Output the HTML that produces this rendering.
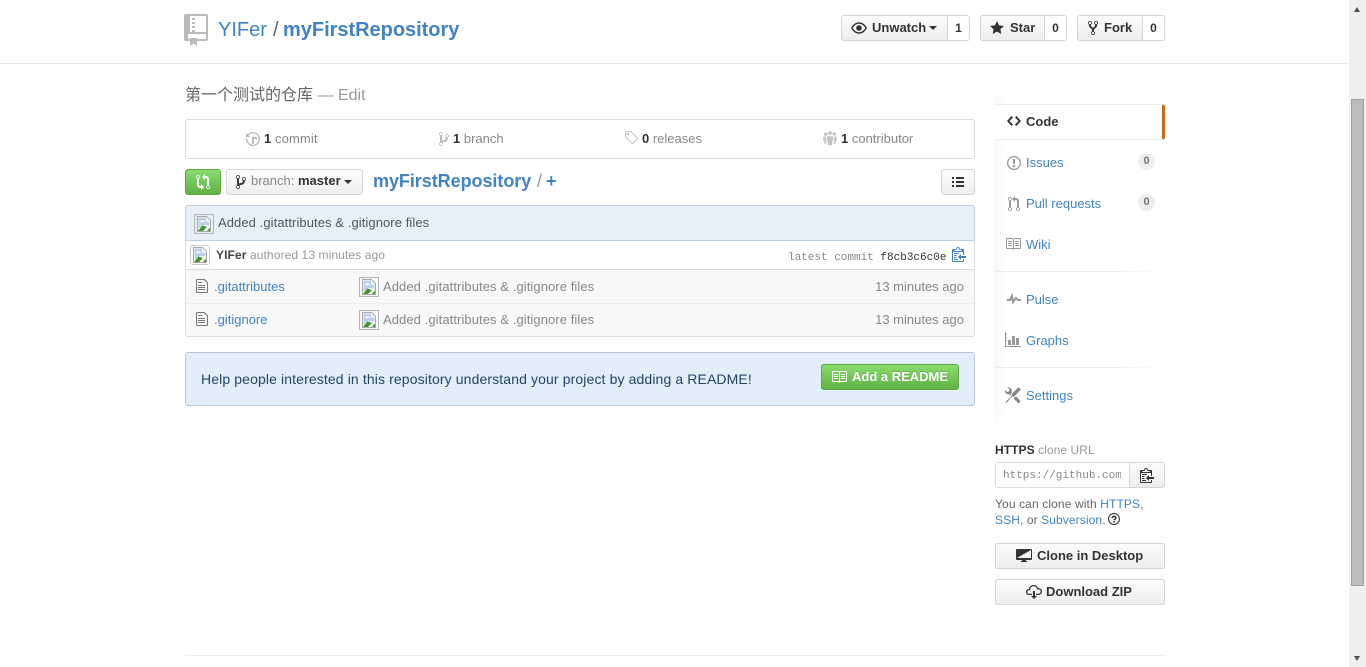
<!DOCTYPE html>
<html lang="zh-CN">
<head>
<meta charset="utf-8">
<title>myFirstRepository</title>
<style>
html,body{margin:0;padding:0;width:1366px;height:667px;overflow:hidden;background:#fff}
body{font-family:"Liberation Sans","Noto Sans CJK SC",sans-serif;font-size:13px;color:#333;position:relative}
.t{position:absolute;white-space:nowrap;line-height:18px;height:18px}
.b{position:absolute;box-sizing:border-box}
a,.l{color:#4183c4;text-decoration:none}
.g{color:#888}
.btn{position:absolute;box-sizing:border-box;border:1px solid #d5d5d5;border-radius:3px;background:linear-gradient(#fcfcfc,#eee)}
.lft{border-radius:3px 0 0 3px}
.cnt{position:absolute;box-sizing:border-box;border:1px solid #d5d5d5;border-left:0;border-radius:0 3px 3px 0;background:#fff;text-align:center;font-weight:bold;font-size:12px;color:#333;line-height:24px;height:26px}
svg.i{position:absolute;display:block}
.mono{font-family:"Liberation Mono","DejaVu Sans Mono",monospace}
.car{position:absolute;width:0;height:0;border:4px solid transparent;border-top-color:#333;border-bottom:0}
.bi{position:absolute;box-sizing:border-box;width:20px;height:20px;border:1px solid #b4b4b4}
.bi svg{position:absolute;left:1px;top:1px}
.pill{position:absolute;width:17px;height:17px;border-radius:9px;background:#eee;color:#777;font-size:11px;font-weight:bold;text-align:center;line-height:16px}
.ls{letter-spacing:.08px}
</style>
</head>
<body>
<svg width="0" height="0" style="position:absolute">
<defs>
<symbol id="repo" viewBox="0 0 25 32"><rect x="0" y="0" width="24" height="27" rx="2" fill="#bbb"/><path d="M6 2h16v16H6z" fill="#fff"/><path d="M4 20h18v5H4z" fill="#fff"/><path d="M8 4h3v2H8zM8 8h3v2H8zM8 12h3v2H8zM8 16h3v2H8z" fill="#bbb"/><path d="M6 24h7v8l-3.500-2.500L6 32z" fill="#bbb"/></symbol>
<symbol id="branch" viewBox="0 0 10 16"><path d="M10 5c0-1.11-.89-2-2-2a1.993 1.993 0 0 0-1 3.72v.3c-.02.52-.23.98-.63 1.38-.4.4-.86.61-1.38.63-.83.02-1.48.16-2 .45V4.72a1.993 1.993 0 0 0-1-3.72C.88 1 0 1.89 0 3a2 2 0 0 0 1 1.72v6.56c-.59.35-1 .99-1 1.72 0 1.11.89 2 2 2 1.11 0 2-.89 2-2 0-.53-.2-1-.53-1.36.09-.06.48-.41.59-.47.25-.11.56-.17.94-.17 1.05-.05 1.95-.45 2.75-1.25S8.95 7.77 9 6.73h-.02C9.59 6.37 10 5.73 10 5zM2 1.8c.66 0 1.2.55 1.2 1.2 0 .65-.55 1.2-1.2 1.2C1.35 4.2.8 3.65.8 3c0-.65.55-1.2 1.2-1.2zm0 12.41c-.66 0-1.2-.55-1.2-1.2 0-.65.55-1.2 1.2-1.2.65 0 1.2.55 1.2 1.2 0 .65-.55 1.2-1.2 1.2zm6-8c-.66 0-1.2-.55-1.2-1.2 0-.65.55-1.2 1.2-1.2.65 0 1.2.55 1.2 1.2 0 .65-.55 1.2-1.2 1.2z"/></symbol>
<symbol id="eye" viewBox="0 0 16 16"><path d="M.8 8C2.500 5 5 3 8 3s5.500 2 7.200 5c-1.700 3-4.200 5-7.200 5S2.500 11 .8 8z" fill="none" stroke="#333" stroke-width="1.400"/><circle cx="8" cy="8" r="2.800" fill="#333"/></symbol>
<symbol id="star" viewBox="0 0 14 16"><path d="M14 6l-4.900-.64L7 1 4.900 5.360 0 6l3.600 3.260L2.670 14 7 11.670 11.330 14l-.93-4.740L14 6z"/></symbol>
<symbol id="fork" viewBox="0 0 10 16"><path d="M8 1a1.993 1.993 0 0 0-1 3.720V6L5 8 3 6V4.720A1.993 1.993 0 0 0 2 1a1.993 1.993 0 0 0-1 3.720V6.500l3 3v1.780A1.993 1.993 0 0 0 5 15a1.993 1.993 0 0 0 1-3.720V9.500l3-3V4.720A1.993 1.993 0 0 0 8 1zM2 4.200C1.340 4.200.8 3.650.8 3c0-.65.55-1.200 1.200-1.200.65 0 1.200.55 1.200 1.200 0 .65-.55 1.200-1.200 1.200zm3 10c-.66 0-1.200-.55-1.200-1.200 0-.65.55-1.200 1.200-1.200.65 0 1.200.55 1.200 1.200 0 .65-.55 1.200-1.200 1.200zm3-10c-.66 0-1.200-.55-1.200-1.200 0-.65.55-1.200 1.200-1.200.65 0 1.200.55 1.200 1.200 0 .65-.55 1.200-1.200 1.200z"/></symbol>
<symbol id="code" viewBox="0 0 14 16"><path d="M9.500 3L8 4.500 11.500 8 8 11.500 9.500 13 14 8 9.500 3zm-5 0L0 8l4.500 5L6 11.500 2.500 8 6 4.500 4.500 3z"/></symbol>
<symbol id="issue" viewBox="0 0 14 16"><path d="M7 2.300c3.140 0 5.700 2.560 5.700 5.700s-2.560 5.700-5.700 5.700A5.710 5.710 0 0 1 1.300 8c0-3.140 2.560-5.700 5.700-5.700zM7 1C3.140 1 0 4.140 0 8s3.140 7 7 7 7-3.140 7-7-3.140-7-7-7zm1 3H6v5h2V4zm0 6H6v2h2v-2z"/></symbol>
<symbol id="pr" viewBox="0 0 12 16"><path d="M11 11.280V5c-.03-.78-.34-1.470-.94-2.060C9.460 2.350 8.780 2.030 8 2H7V0L4 3l3 3V4h1c.27.02.48.11.69.31.21.2.3.42.31.69v6.280A1.993 1.993 0 0 0 10 15a1.993 1.993 0 0 0 1-3.720zm-1 2.920c-.66 0-1.200-.55-1.200-1.200 0-.65.55-1.200 1.200-1.200.65 0 1.200.55 1.200 1.200 0 .65-.55 1.200-1.200 1.200zM4 3c0-1.110-.89-2-2-2a1.993 1.993 0 0 0-1 3.720v6.560A1.993 1.993 0 0 0 2 15a1.993 1.993 0 0 0 1-3.720V4.720c.59-.34 1-.98 1-1.720zm-.8 10c0 .66-.55 1.200-1.200 1.200-.65 0-1.200-.55-1.200-1.200 0-.65.55-1.200 1.200-1.200.65 0 1.200.55 1.200 1.200zM2 4.200C1.340 4.200.8 3.650.8 3c0-.65.55-1.200 1.200-1.200.65 0 1.200.55 1.200 1.200 0 .65-.55 1.200-1.200 1.200z"/></symbol>
<symbol id="book" viewBox="0 0 16 16"><path d="M3 5h4v1H3V5zm0 3h4V7H3v1zm0 2h4V9H3v1zm11-5h-4v1h4V5zm0 2h-4v1h4V7zm0 2h-4v1h4V9zm2-6v9c0 .55-.45 1-1 1H9.500l-1 1-1-1H2c-.55 0-1-.45-1-1V3c0-.55.45-1 1-1h5.500l1 1 1-1H15c.55 0 1 .45 1 1zm-8 .5L7.500 3H2v9h6V3.500zm7-.5H9.500l-.5.5V12h6V3z"/></symbol>
<symbol id="pulse" viewBox="0 0 14 16"><path d="M11.500 8L8.800 5.400 6.600 8.500 5.500 1.600 2.380 8H0v2h3.600l.9-1.800.9 5.400L9 8.500l1.600 1.500H14V8z"/></symbol>
<symbol id="graph" viewBox="0 0 16 16"><path d="M16 14v1H0V0h1v2h1v1H1v2h1v1H1v2h1v1H1v5h15zM6 13H3V8h3v5zm4 0H7V4h3v9zm4 0h-3V6h3v7z"/></symbol>
<symbol id="tools" viewBox="0 0 16 16"><path d="M4.480 7.270c.26.26 1.280 1.330 1.280 1.330l.56-.58-.88-.91 1.690-1.800s-.76-.74-.43-.45c.32-1.190.03-2.510-.87-3.440C4.930.5 3.660.2 2.520.51l1.930 2-.51 1.960-1.890.52-1.930-2C-.19 4.170.1 5.480 1 6.400c.94.98 2.290 1.260 3.480.87zm6.440 1.940l-2.330 2.300 3.840 3.980c.31.33.73.49 1.140.49.41 0 .82-.16 1.140-.49.63-.65.63-1.700 0-2.350l-3.790-3.930zM16 2.530L13.550 0 6.330 7.460l.88.91-4.310 4.460-.99.53-1.390 2.270.35.37 2.200-1.440.51-1.020L7.900 9.080l.88.91L16 2.530z"/></symbol>
<symbol id="clippy" viewBox="0 0 14 16"><path d="M2 13h4v1H2v-1zm5-6H2v1h5V7zm2 3V8l-3 3 3 3v-2h5v-2H9zM4.500 9H2v1h2.500V9zM2 12h2.500v-1H2v1zm9 1h1v2c-.02.28-.11.52-.3.7-.19.18-.42.28-.7.3H1c-.55 0-1-.45-1-1V4c0-.55.45-1 1-1h3c0-1.110.89-2 2-2 1.110 0 2 .89 2 2h3c.55 0 1 .45 1 1v5h-1V6H1v9h10v-2zM2 5h8c0-.55-.45-1-1-1H8c-.55 0-1-.45-1-1s-.45-1-1-1-1 .45-1 1-.45 1-1 1H3c-.55 0-1 .45-1 1z"/></symbol>
<symbol id="file" viewBox="0 0 12 16"><path d="M6 5H2V4h4v1zM2 8h7V7H2v1zm0 2h7V9H2v1zm0 2h7v-1H2v1zm10-7.500V14c0 .55-.45 1-1 1H1c-.55 0-1-.45-1-1V2c0-.55.45-1 1-1h7.500L12 4.500zM11 5L8 2H1v12h10V5z"/></symbol>
<symbol id="tag" viewBox="0 0 14 16"><path d="M7.730 1.730C7.260 1.260 6.620 1 5.960 1H3.500C2.130 1 1 2.130 1 3.500v2.470c0 .66.27 1.300.73 1.770l6.060 6.060c.39.39 1.020.39 1.410 0l4.590-4.590a.996.996 0 0 0 0-1.410L7.730 1.730zM2.380 7.090c-.31-.3-.47-.7-.47-1.130V3.500c0-.88.72-1.590 1.590-1.590h2.470c.42 0 .83.16 1.130.47l6.140 6.130-4.730 4.730-6.130-6.150zM3.010 3h2v2H3V3h.01z"/></symbol>
<symbol id="history" viewBox="0 0 14 16"><path d="M8 13H6V6h5v2H8v5zM7 1C4.810 1 2.870 2.020 1.590 3.590L0 2v4h4L2.500 4.500C3.550 3.170 5.170 2.300 7 2.300c3.140 0 5.700 2.560 5.700 5.700s-2.560 5.700-5.700 5.700A5.710 5.710 0 0 1 1.300 8c0-.34.03-.67.09-1H.08C.03 7.330 0 7.660 0 8c0 3.860 3.140 7 7 7s7-3.140 7-7-3.140-7-7-7z"/></symbol>
<symbol id="org" viewBox="0 0 14 16"><circle cx="2.600" cy="4" r="1.800"/><circle cx="11.400" cy="4" r="1.800"/><path d="M.6 6.500h2.200V12h.8v1.500H1.200V11H.2V7z"/><path d="M13.400 6.500h-2.200V12h-.8v1.500h2.400V11h1V7z"/><circle cx="7" cy="3" r="2.200" stroke="#fff" stroke-width=".5"/><path d="M4.300 6h5.400a.8.8 0 0 1 .8.8V11H9.500v4.500h-5V11H3.500V6.800a.8.8 0 0 1 .8-.8z" stroke="#fff" stroke-width=".6"/></symbol>
<symbol id="list" viewBox="0 0 12 12"><path d="M0 1h2v2H0zM4 1h8v2H4zM0 5h2v2H0zM4 5h8v2H4zM0 9h2v2H0zM4 9h8v2H4z"/></symbol>
<symbol id="desktop" viewBox="0 0 16 16"><path d="M15 2H1c-.55 0-1 .45-1 1v9c0 .55.45 1 1 1h5.340c-.25.61-.86 1.390-2.340 2h8c-1.480-.61-2.090-1.390-2.340-2H15c.55 0 1-.45 1-1V3c0-.55-.45-1-1-1zm0 9H1V3h14v8z"/><path d="M1 3h14L1 11z"/></symbol>
<symbol id="cloud" viewBox="0 0 16 16"><path d="M9 12h2l-3 3-3-3h2V7h2v5zm3-8c0-.44-.91-3-4.500-3C5.080 1 3 2.920 3 5 1.020 5 0 6.520 0 8c0 1.530 1 3 3 3h3V9.700H3C1.380 9.700 1.300 8.280 1.300 8c0-.17.05-1.700 1.700-1.700h1.300V5c0-1.390 1.560-2.700 3.200-2.700 2.550 0 3.130 1.550 3.200 1.800v1.200H12c.81 0 2.700.22 2.700 2.200 0 2.090-2.250 2.200-2.700 2.200h-2V11h2c2.080 0 4-1.160 4-3.500C16 5.060 14.080 4 12 4z"/></symbol>
<symbol id="question" viewBox="0 0 14 16"><path d="M6 10h2v2H6v-2zm4-3.500C10 8.640 8 9 8 9H6c0-.55.45-1 1-1h.5c.28 0 .5-.22.5-.5v-1c0-.28-.22-.5-.5-.5h-1c-.28 0-.5.22-.5.5V7H4c0-1.500 1.500-3 3-3s3 1 3 2.500zM7 2.300c3.140 0 5.700 2.560 5.700 5.700s-2.560 5.700-5.700 5.700A5.710 5.710 0 0 1 1.300 8c0-3.140 2.560-5.700 5.700-5.700zM7 1C3.140 1 0 4.140 0 8s3.140 7 7 7 7-3.140 7-7-3.140-7-7-7z"/></symbol>
<symbol id="compare" viewBox="0 0 14 16"><path d="M5 12H4c-.27-.02-.48-.11-.69-.31-.21-.2-.3-.42-.31-.69V4.720A1.993 1.993 0 0 0 2 1a1.993 1.993 0 0 0-1 3.720V11c.03.78.34 1.470.94 2.060.6.59 1.280.91 2.060.94h1v2l3-3-3-3v2zM2 1.800c.66 0 1.200.55 1.200 1.200 0 .65-.55 1.200-1.200 1.200C1.350 4.200.8 3.650.8 3c0-.65.55-1.200 1.200-1.200zm11 9.480V5c-.03-.78-.34-1.470-.94-2.060-.6-.59-1.280-.91-2.060-.94H9V0L6 3l3 3V4h1c.27.02.48.11.69.31.21.2.3.42.31.69v6.280A1.993 1.993 0 0 0 12 15a1.993 1.993 0 0 0 1-3.720zm-1 2.920c-.66 0-1.200-.55-1.200-1.200 0-.65.55-1.200 1.200-1.200.65 0 1.200.55 1.200 1.200 0 .65-.55 1.200-1.200 1.200z"/></symbol>
<symbol id="broken" viewBox="0 0 16 16"><path d="M1.500.5h9l4 4v11h-13z" fill="#fff" stroke="#a8a8a8"/><path d="M2.500 1.500h7.500v4h3.500v4L8 9l-5.500 4z" fill="#bcd0ec"/><path d="M4 6c1-2.500 4-2.500 5 0z" fill="#fff"/><path d="M2 15l4.500-5.500 4.500 1.500-4 4z" fill="#43942a"/><path d="M11 15l3-3.500V15z" fill="#43942a"/></symbol>
</defs>
</svg>

<!-- header -->
<div class="b" style="left:0;top:63px;width:1349px;height:1px;background:#e8e8e8"></div>
<svg class="i" style="left:184px;top:14px" width="25" height="32"><use href="#repo"/></svg>
<div class="t" style="left:218px;top:18px;height:24px;line-height:24px;font-size:20px;color:#4183c4">YIFer</div>
<div class="t" style="left:273px;top:18px;height:24px;line-height:24px;font-size:20px;color:#666">/</div>
<div class="t" style="left:283px;top:18px;height:24px;line-height:24px;font-size:20px;color:#4183c4;font-weight:bold;letter-spacing:-.02px">myFirstRepository</div>

<div class="btn lft" style="left:841px;top:15px;width:107px;height:26px"></div>
<svg class="i" style="left:851px;top:20px" width="16" height="16"><use href="#eye"/></svg>
<div class="t" style="left:872px;top:19px;font-weight:bold">Unwatch</div>
<div class="car" style="left:929px;top:26px"></div>
<div class="cnt" style="left:948px;top:15px;width:22px">1</div>

<div class="btn lft" style="left:980px;top:15px;width:65px;height:26px"></div>
<svg class="i" style="left:990px;top:20px" width="14" height="16" fill="#333"><use href="#star"/></svg>
<div class="t" style="left:1010px;top:19px;font-weight:bold">Star</div>
<div class="cnt" style="left:1045px;top:15px;width:22px">0</div>

<div class="btn lft" style="left:1077px;top:15px;width:66px;height:26px"></div>
<svg class="i" style="left:1088px;top:20px" width="10" height="16" fill="#333"><use href="#fork"/></svg>
<div class="t" style="left:1104px;top:19px;font-weight:bold">Fork</div>
<div class="cnt" style="left:1143px;top:15px;width:22px">0</div>

<!-- description -->
<div class="t" style="left:185px;top:87px;font-size:16px;color:#666">第一个测试的仓库 <span style="color:#999">— Edit</span></div>

<!-- numbers summary -->
<div class="b" style="left:185px;top:119px;width:790px;height:40px;border:1px solid #ddd;border-radius:3px"></div>
<svg class="i" style="left:246px;top:131px" width="14" height="16" fill="#bbb"><use href="#history"/></svg>
<div class="t g" style="left:264px;top:130px;letter-spacing:.1px"><b style="color:#333">1</b> commit</div>
<svg class="i" style="left:439px;top:131px" width="10" height="16" fill="#bbb"><use href="#branch"/></svg>
<div class="t g" style="left:453px;top:130px"><b style="color:#333">1</b> branch</div>
<svg class="i" style="left:624px;top:130px" width="14" height="16" fill="#bbb"><use href="#tag"/></svg>
<div class="t g" style="left:642px;top:130px"><b style="color:#333">0</b> releases</div>
<svg class="i" style="left:823px;top:130px" width="14" height="16" fill="#c4c4c4"><use href="#org"/></svg>
<div class="t g" style="left:841px;top:130px"><b style="color:#333">1</b> contributor</div>

<!-- toolbar -->
<div class="b" style="left:185px;top:169px;width:36px;height:26px;border:1px solid #5ca941;border-radius:3px;background:linear-gradient(#8add6d,#60b044)"></div>
<svg class="i" style="left:196px;top:174px" width="14" height="16" fill="#fff"><use href="#compare"/></svg>
<div class="btn" style="left:226px;top:169px;width:137px;height:26px"></div>
<svg class="i" style="left:236px;top:174px" width="10" height="16" fill="#333"><use href="#branch"/></svg>
<div class="t" style="left:251px;top:172px"><span style="color:#888">branch:</span> <b>master</b></div>
<div class="car" style="left:344px;top:180px"></div>
<div class="t" style="left:373px;top:170px;height:22px;line-height:22px;font-size:18px;color:#4183c4;font-weight:bold;letter-spacing:-.05px">myFirstRepository</div>
<div class="t" style="left:537px;top:170px;height:22px;line-height:22px;font-size:18px;color:#999">/</div>
<div class="t" style="left:546px;top:170px;height:22px;line-height:22px;font-size:18px;color:#4183c4;font-weight:bold">+</div>
<div class="btn" style="left:941px;top:169px;width:34px;height:26px"></div>
<svg class="i" style="left:952px;top:176px" width="12" height="12" fill="#333"><use href="#list"/></svg>

<!-- commit tease -->
<div class="b" style="left:185px;top:205px;width:790px;height:132px;border:1px solid #ddd;border-radius:3px;background:#f8f8f8"></div>
<div class="b" style="left:185px;top:205px;width:790px;height:36px;border:1px solid #bfd0de;border-radius:3px 3px 0 0;background:#e6f1f6"></div>
<div class="bi" style="left:194px;top:214px"><svg width="16" height="16"><use href="#broken"/></svg></div>
<div class="t ls" style="left:218px;top:214px;color:#4e575b">Added .gitattributes &amp; .gitignore files</div>
<div class="b" style="left:186px;top:241px;width:788px;height:29px;background:#fff;border-bottom:1px solid #ddd"></div>
<div class="bi" style="left:190px;top:245px;border-color:#ccc;border-radius:3px"><svg width="16" height="16"><use href="#broken"/></svg></div>
<div class="t" style="left:216px;top:246px;font-size:12px;color:#999;letter-spacing:.1px"><b style="color:#444">YIFer</b> authored 13 minutes ago</div>
<div class="t mono" style="left:788px;top:249px;font-size:11px;color:#888">latest commit <span style="color:#333">f8cb3c6c0e</span></div>
<svg class="i" style="left:952px;top:246px" width="14" height="16" fill="#4183c4"><use href="#clippy"/></svg>

<!-- files -->
<svg class="i" style="left:196px;top:278px" width="12" height="16" fill="#777"><use href="#file"/></svg>
<div class="t l" style="left:214px;top:278px">.gitattributes</div>
<div class="bi" style="left:359px;top:277px"><svg width="16" height="16"><use href="#broken"/></svg></div>
<div class="t ls" style="left:383px;top:278px;color:#888">Added .gitattributes &amp; .gitignore files</div>
<div class="t" style="right:402px;top:278px;color:#888">13 minutes ago</div>
<div class="b" style="left:186px;top:303px;width:788px;height:1px;background:#eee"></div>
<svg class="i" style="left:196px;top:311px" width="12" height="16" fill="#777"><use href="#file"/></svg>
<div class="t l" style="left:214px;top:311px">.gitignore</div>
<div class="bi" style="left:359px;top:310px"><svg width="16" height="16"><use href="#broken"/></svg></div>
<div class="t ls" style="left:383px;top:311px;color:#888">Added .gitattributes &amp; .gitignore files</div>
<div class="t" style="right:402px;top:311px;color:#888">13 minutes ago</div>

<!-- readme banner -->
<div class="b" style="left:185px;top:352px;width:790px;height:54px;border:1px solid #b8c8d8;border-radius:3px;background:#e2eef9"></div>
<div class="t" style="left:201px;top:370px;font-size:14px;color:#246;letter-spacing:.118px">Help people interested in this repository understand your project by adding a README!</div>
<div class="b" style="left:821px;top:364px;width:138px;height:26px;border:1px solid #5ca941;border-radius:3px;background:linear-gradient(#8add6d,#60b044)"></div>
<svg class="i" style="left:831px;top:369px" width="16" height="16" fill="#fff"><use href="#book"/></svg>
<div class="t" style="left:852px;top:368px;font-weight:bold;color:#fff;text-shadow:0 -1px 0 rgba(0,0,0,.15)">Add a README</div>

<!-- sidebar -->
<div class="b" style="left:995px;top:90px;width:170px;height:340px;background:linear-gradient(to right,#f6f6f6,#fff 8px);-webkit-mask-image:linear-gradient(to bottom,transparent,#000 12px,#000 320px,transparent);mask-image:linear-gradient(to bottom,transparent,#000 12px,#000 320px,transparent)"></div>
<div class="b" style="left:995px;top:104px;width:170px;height:36px;background:#fff;border-top:1px solid #eee;border-bottom:1px solid #eee;border-right:3px solid #d26911;border-radius:0 3px 3px 0"></div>
<svg class="i" style="left:1007px;top:113px" width="14" height="16" fill="#333"><use href="#code"/></svg>
<div class="t" style="left:1026px;top:113px;color:#333;font-weight:bold">Code</div>

<svg class="i" style="left:1007px;top:155px" width="14" height="16" fill="#999"><use href="#issue"/></svg>
<div class="t l" style="left:1026px;top:154px">Issues</div>
<div class="pill" style="left:1138px;top:153px">0</div>

<svg class="i" style="left:1008px;top:196px" width="12" height="16" fill="#999"><use href="#pr"/></svg>
<div class="t l" style="left:1026px;top:195px">Pull requests</div>
<div class="pill" style="left:1138px;top:194px">0</div>

<svg class="i" style="left:1005px;top:236px" width="16" height="16" fill="#999"><use href="#book"/></svg>
<div class="t l" style="left:1026px;top:236px">Wiki</div>

<div class="b" style="left:995px;top:271px;width:170px;height:1px;background:linear-gradient(to right,#eee,#eee 70%,#fff)"></div>

<svg class="i" style="left:1007px;top:291px" width="14" height="16" fill="#999"><use href="#pulse"/></svg>
<div class="t l" style="left:1026px;top:291px">Pulse</div>

<svg class="i" style="left:1005px;top:332px" width="16" height="16" fill="#999"><use href="#graph"/></svg>
<div class="t l" style="left:1026px;top:332px">Graphs</div>

<div class="b" style="left:995px;top:367px;width:170px;height:1px;background:linear-gradient(to right,#eee,#eee 70%,#fff)"></div>

<svg class="i" style="left:1005px;top:387px" width="16" height="16" fill="#888"><use href="#tools"/></svg>
<div class="t l" style="left:1026px;top:387px">Settings</div>

<!-- clone -->
<div class="t" style="left:995px;top:441px;font-size:12px;color:#999;letter-spacing:.07px"><b style="color:#333">HTTPS</b> clone URL</div>
<div class="b" style="left:995px;top:462px;width:135px;height:26px;border:1px solid #ddd;border-radius:3px 0 0 3px;background:#fff;overflow:hidden"></div>
<div class="t mono" style="left:1003px;top:467px;width:118px;overflow:hidden;font-size:11px;color:#888">https://github.com</div>
<div class="b" style="left:1129px;top:462px;width:36px;height:26px;border:1px solid #d5d5d5;border-radius:0 3px 3px 0;background:linear-gradient(#fcfcfc,#eee)"></div>
<svg class="i" style="left:1140px;top:467px" width="14" height="16" fill="#333"><use href="#clippy"/></svg>
<div class="t" style="left:995px;top:495px;font-size:12px;color:#666;letter-spacing:.12px">You can clone with <a>HTTPS</a>,</div>
<div class="t" style="left:995px;top:511px;font-size:12px;color:#666;letter-spacing:.1px"><a>SSH</a>, or <a>Subversion</a>.</div>
<svg class="i" style="left:1108px;top:512px" width="12" height="14" fill="#333"><use href="#question"/></svg>

<div class="btn" style="left:995px;top:543px;width:170px;height:26px"></div>
<svg class="i" style="left:1016px;top:547px" width="16" height="16" fill="#333"><use href="#desktop"/></svg>
<div class="t" style="left:1037px;top:547px;font-weight:bold">Clone in Desktop</div>
<div class="btn" style="left:995px;top:579px;width:170px;height:26px"></div>
<svg class="i" style="left:1026px;top:584px" width="16" height="16" fill="#333"><use href="#cloud"/></svg>
<div class="t" style="left:1046px;top:583px;font-weight:bold">Download ZIP</div>

<!-- footer rule -->
<div class="b" style="left:185px;top:655px;width:980px;height:1px;background:#eee"></div>

<!-- scrollbar -->
<div class="b" style="left:1349px;top:0;width:17px;height:667px;background:#f0f0f0"></div>
<div class="b" style="left:1351px;top:99px;width:13px;height:487px;background:#bcbcbc;border:1px solid #a0a0a0"></div>
<div class="b" style="left:1354px;top:7px;width:0;height:0;border-left:3.5px solid transparent;border-right:3.5px solid transparent;border-bottom:5px solid #505050;box-sizing:content-box"></div>
<div class="b" style="left:1354px;top:656px;width:0;height:0;border-left:3.5px solid transparent;border-right:3.5px solid transparent;border-top:5px solid #505050;box-sizing:content-box"></div>
</body>
</html>
